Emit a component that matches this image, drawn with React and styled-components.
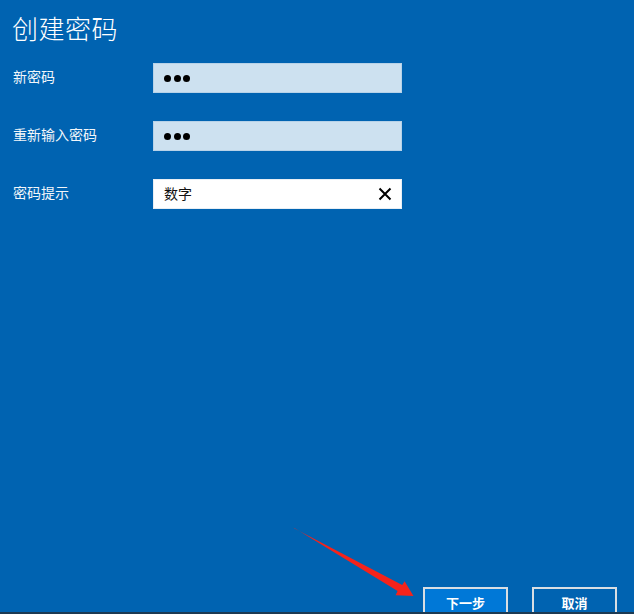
import React from 'react'
import styled, { createGlobalStyle } from 'styled-components'

const GlobalStyle = createGlobalStyle`
    html, body {
        margin: 0;
        padding: 0;
        background: #0063b1;
    }
    body {
        font-family: 'Noto Sans CJK SC', 'Noto Sans', sans-serif;
    }
`

const Page = styled.div`
    position: relative;
    box-sizing: border-box;
    width: 634px;
    height: 614px;
    padding-top: 11px;
    background-color: #0063b1;
    border-bottom: 2px solid #1d3a52;
    display: flex;
    flex-direction: column;
    overflow: hidden;
`

const Title = styled.h1`
    margin: 0 0 18px 12px;
    font-size: 26px;
    line-height: 34px;
    font-weight: 300;
    color: #fff;
    letter-spacing: 0.5px;
`

const Form = styled.div`
    display: grid;
    grid-template-columns: 140px 249px;
    grid-auto-rows: 30px;
    row-gap: 28px;
    padding-left: 13px;
    align-items: center;
`

const Label = styled.label`
    font-size: 14px;
    color: #f2f6fa;
    line-height: 26px;
    padding-bottom: 4px;
`

const Field = styled.div`
    box-sizing: border-box;
    height: 30px;
    display: flex;
    align-items: center;
    padding: 0 8px 0 10px;
    background-color: ${(p) => (p.filled ? '#fff' : '#cde1f0')};
    border: 1px solid ${(p) => (p.filled ? '#e8eef4' : '#b7d2e8')};
    font-size: 14px;
    color: #111;
`

const Dots = styled.div`
    display: flex;
    gap: 2.5px;
    flex: 1;
`

const Dot = styled.span`
    width: 7px;
    height: 7px;
    border-radius: 50%;
    background: #000;
`

const Value = styled.span`
    flex: 1;
    line-height: 18px;
    padding-bottom: 2px;
`

const Clear = styled.svg`
    width: 14px;
    height: 14px;
    margin-right: 1px;
`

const Spacer = styled.div`
    flex: 1;
`

const Footer = styled.div`
    display: flex;
    justify-content: flex-end;
    gap: 24px;
    padding-right: 17px;
    margin-bottom: -8px;
`

const Button = styled.button`
    box-sizing: border-box;
    width: 85px;
    height: 33px;
    padding: 0 0 2px;
    border: 2px solid #d9dee3;
    background-color: ${(p) => (p.primary ? '#0078d7' : '#0063b1')};
    color: #fff;
    font-family: 'Noto Sans CJK SC', sans-serif;
    font-size: 13px;
    font-weight: 700;
`

const Arrow = styled.svg`
    position: absolute;
    left: 0;
    top: 0;
    width: 634px;
    height: 614px;
    pointer-events: none;
`

const PasswordDots = () => (
    <Dots>
        <Dot />
        <Dot />
        <Dot />
    </Dots>
)

export default function App() {
    return (
        <>
            <GlobalStyle />
            <Page>
                <Title>创建密码</Title>
                <Form>
                    <Label>新密码</Label>
                    <Field>
                        <PasswordDots />
                    </Field>
                    <Label>重新输入密码</Label>
                    <Field>
                        <PasswordDots />
                    </Field>
                    <Label>密码提示</Label>
                    <Field filled>
                        <Value>数字</Value>
                        <Clear viewBox="0 0 14 14">
                            <path d="M1.5 1.5 L12.5 12.5 M12.5 1.5 L1.5 12.5" stroke="#000" strokeWidth="2" />
                        </Clear>
                    </Field>
                </Form>
                <Spacer />
                <Footer>
                    <Button primary>下一步</Button>
                    <Button>取消</Button>
                </Footer>
                <Arrow viewBox="0 0 634 614">
                    <polygon
                        points="293.5,527.5 294.5,528.5 402.2,585 404.6,581.3 413.5,596 395.6,595.3 397.6,591"
                        fill="#f5231b"
                    />
                </Arrow>
            </Page>
        </>
    )
}
